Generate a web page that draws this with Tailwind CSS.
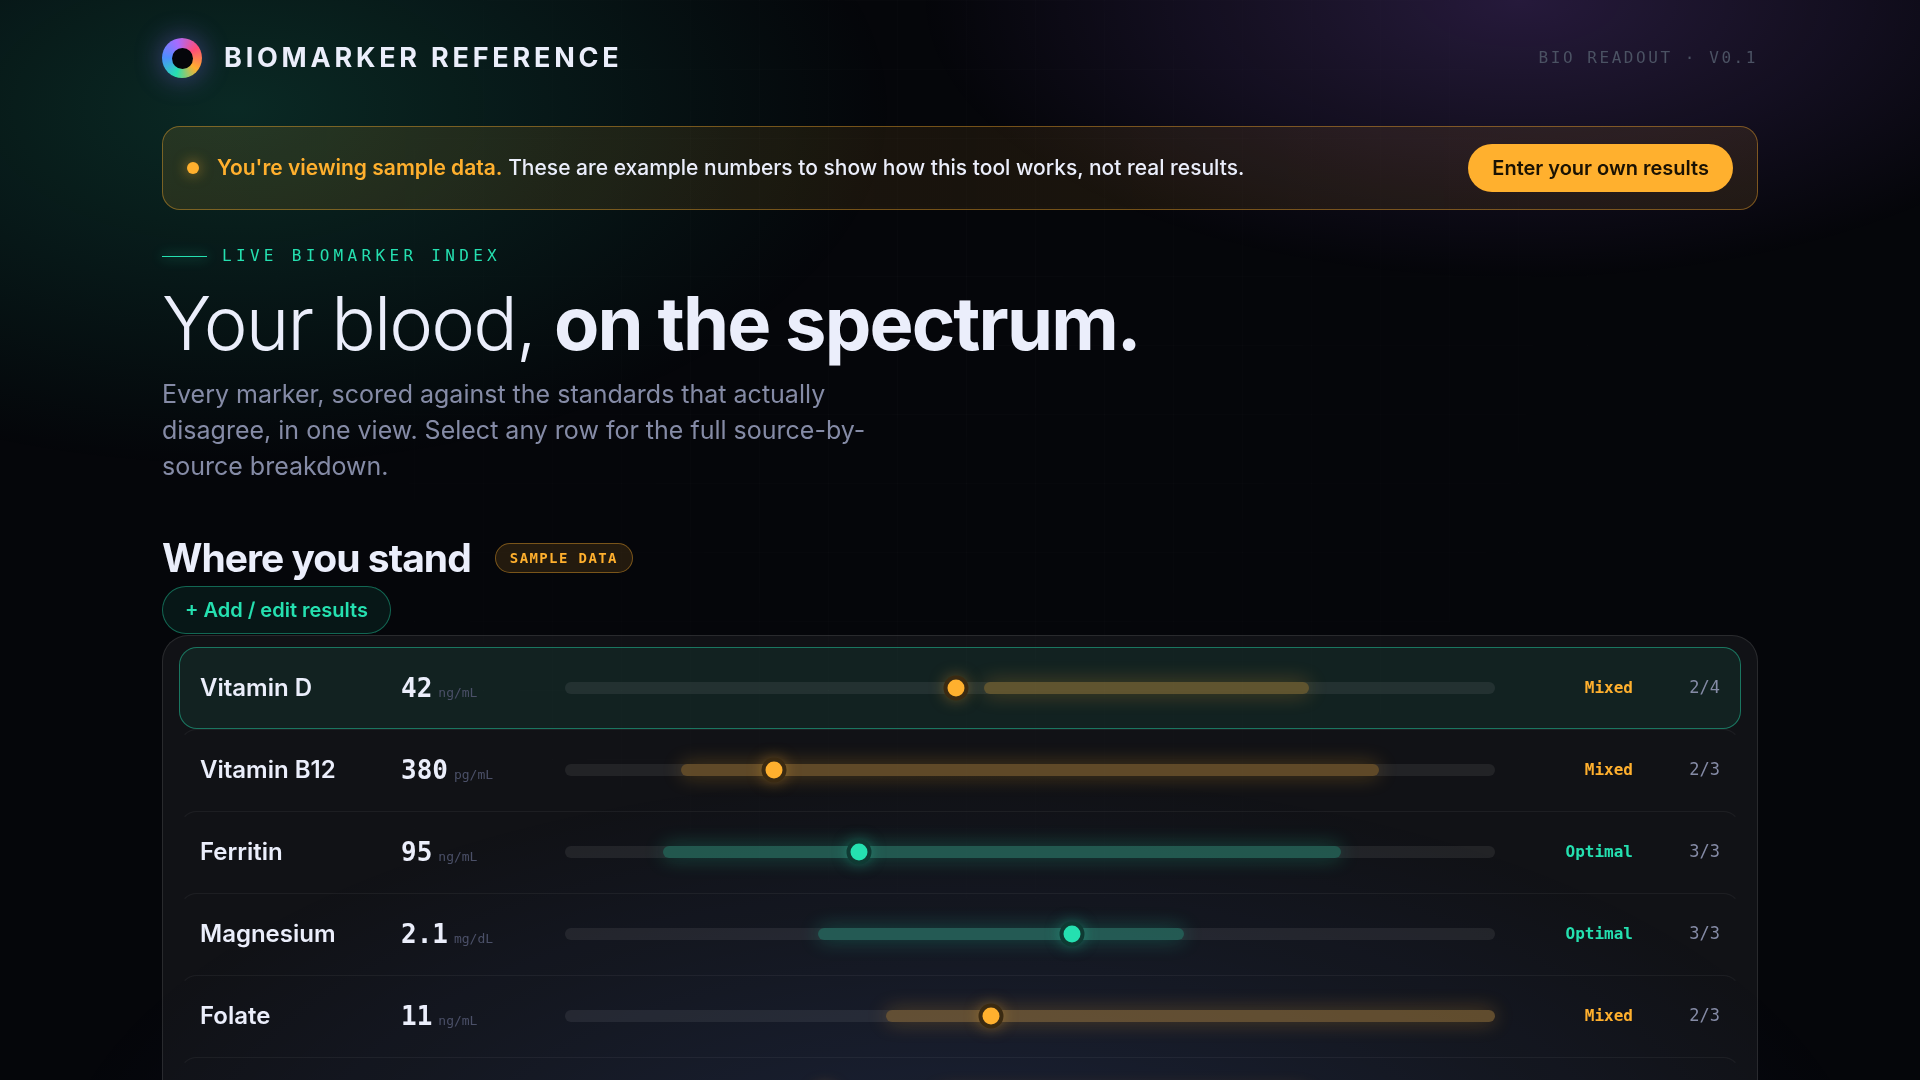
<!DOCTYPE html>
<html lang="en">
<head>
  <meta charset="UTF-8" />
  <meta name="viewport" content="width=device-width, initial-scale=1.0" />
  <title>Biomarker Reference</title>
  <script src="https://cdn.jsdelivr.net/npm/@tailwindcss/browser@4"></script>
  <style>
    .glow {
      background:
        radial-gradient(ellipse 660px 360px at 235px 108px, rgba(37, 224, 176, .16), transparent),
        radial-gradient(ellipse 600px 280px at 1520px 0px, rgba(168, 107, 255, .20), transparent),
        radial-gradient(ellipse 920px 430px at 960px 1200px, rgba(77, 124, 255, .14), transparent);
    }
    .grid-lines {
      background-image:
        linear-gradient(rgba(255, 255, 255, .014) 1px, transparent 1px),
        linear-gradient(90deg, rgba(255, 255, 255, .014) 1px, transparent 1px);
      background-size: 69px 69px;
      mask-image: radial-gradient(circle at 50% 30%, #000, transparent 75%);
    }
  </style>
</head>
<body class="min-h-screen bg-[#05060a] text-[#ebeefb] font-['Inter',sans-serif]">

  <div class="glow fixed inset-0 pointer-events-none"></div>
  <div class="grid-lines fixed inset-0 pointer-events-none"></div>

  <div class="relative w-[84%] max-w-[1596px] mx-auto">

    <!-- Header -->
    <header class="flex items-center justify-between pt-[38px]">
      <div class="flex items-center gap-[22px]">
        <div class="w-10 h-10 rounded-full flex items-center justify-center bg-[conic-gradient(from_200deg,#25e0b0,#4d8dff,#a86bff,#ff4d78,#ffb02e,#25e0b0)] shadow-[0_0_28px_rgba(139,107,255,0.45)]">
          <div class="w-[21px] h-[21px] rounded-full bg-[#05060a]"></div>
        </div>
        <span class="text-[27px] leading-10 font-bold tracking-[0.14em]">BIOMARKER REFERENCE</span>
      </div>
      <span class="text-base font-['DejaVu_Sans_Mono',monospace] text-[#4b5263] tracking-[0.16em]">BIO READOUT · V0.1</span>
    </header>

    <!-- Sample data banner -->
    <div class="mt-12 h-21 flex items-center justify-between px-6 rounded-[18px] border border-[#ffb02e]/40 bg-linear-to-r from-[#ffb02e]/12 via-[#ffb02e]/8 to-[#ffb02e]/10">
      <div class="flex items-center gap-[18px]">
        <span class="w-3 h-3 rounded-full bg-[#ffb02e] shadow-[0_0_14px_rgba(255,176,46,0.6)]"></span>
        <p class="text-[21px] font-medium"><strong class="font-semibold text-[#ffb02e]">You're viewing sample data.</strong> These are example numbers to show how this tool works, not real results.</p>
      </div>
      <button class="h-12 px-6 rounded-full bg-[#ffb02e] text-[#1a1203] text-xl font-semibold">Enter your own results</button>
    </div>

    <!-- Hero -->
    <section class="pt-[34px]">
      <div class="flex items-center gap-[15px]">
        <span class="w-[45px] h-px bg-[#25e0b0] shadow-[0_0_12px_#25e0b0]"></span>
        <span class="text-base leading-6 font-['DejaVu_Sans_Mono',monospace] text-[#25e0b0] tracking-[0.27em]">LIVE BIOMARKER INDEX</span>
      </div>
      <h1 class="mt-4 text-[74px] leading-[78px] font-light tracking-tight">Your blood, <strong class="font-bold">on the spectrum.</strong></h1>
      <p class="mt-[14px] max-w-[740px] text-[25px] leading-9 text-[#858ba6]">Every marker, scored against the standards that actually disagree, in one view. Select any row for the full source-by-source breakdown.</p>
    </section>

    <!-- Results heading -->
    <section class="mt-[50px]">
      <div class="flex items-center gap-6">
        <h2 class="text-[39px] leading-12 font-bold tracking-tight">Where you stand</h2>
        <span class="h-[30px] px-[14px] flex items-center rounded-full border border-[#ffb02e]/40 bg-[#ffb02e]/12 text-sm font-bold font-['DejaVu_Sans_Mono',monospace] text-[#ffb02e] tracking-widest">SAMPLE DATA</span>
      </div>
      <button class="mt-1 h-12 px-[22px] block rounded-full border border-[#25e0b0]/40 bg-[#25e0b0]/8 text-[#25e0b0] text-xl font-semibold">+ Add / edit results</button>

      <!-- Marker rows -->
      <div id="rows" class="mt-px px-4 py-[11px] rounded-[26px] border border-white/10 bg-white/5"></div>
    </section>
  </div>

  <script>
    const amber = {
      text: "text-[#ffb02e]",
      band: "bg-[#ffb02e]/28 shadow-[0_0_20px_rgba(255,176,46,0.3)]",
      dot: "bg-[#ffb02e] shadow-[0_0_0_4px_#3a2a12,0_0_16px_2px_rgba(255,176,46,0.5)]"
    };
    const green = {
      text: "text-[#25e0b0]",
      band: "bg-[#25e0b0]/28 shadow-[0_0_20px_rgba(37,224,176,0.3)]",
      dot: "bg-[#25e0b0] shadow-[0_0_0_4px_#0f3a33,0_0_16px_2px_rgba(37,224,176,0.5)]"
    };

    // band is [from, to] and at is the marker, all in percent of the track
    const markers = [
      { name: "Vitamin D", value: "42", unit: "ng/mL", band: [45, 80], at: 42, status: "Mixed", score: "2/4", tone: amber },
      { name: "Vitamin B12", value: "380", unit: "pg/mL", band: [12.5, 87.5], at: 22.5, status: "Mixed", score: "2/3", tone: amber },
      { name: "Ferritin", value: "95", unit: "ng/mL", band: [10.5, 83.4], at: 31.6, status: "Optimal", score: "3/3", tone: green },
      { name: "Magnesium", value: "2.1", unit: "mg/dL", band: [27.2, 66.6], at: 54.5, status: "Optimal", score: "3/3", tone: green },
      { name: "Folate", value: "11", unit: "ng/mL", band: [34.5, 100], at: 45.8, status: "Mixed", score: "2/3", tone: amber },
      { name: "Zinc", value: "88", unit: "µg/dL", band: [40, 80], at: 28, status: "Mixed", score: "2/3", tone: amber }
    ];

    document.getElementById("rows").innerHTML = markers.map((m, i) => `
      <button class="w-full h-[82px] px-5 grid grid-cols-[177px_140px_1fr_114px_63px] gap-x-6 items-center text-left rounded-[18px] border ${i === 0 ? "border-[#25e0b0]/45 bg-[#25e0b0]/8" : "border-transparent border-t-white/5"}">
        <span class="text-2xl font-semibold">${m.name}</span>
        <span class="font-['DejaVu_Sans_Mono',monospace] whitespace-nowrap"><b class="text-[26px]">${m.value}</b><span class="ml-1.5 text-[13px] text-[#4b5068]">${m.unit}</span></span>
        <span class="relative h-3 rounded-full bg-white/7">
          <span class="absolute inset-y-0 rounded-full ${m.tone.band}" style="left:${m.band[0]}%;width:${m.band[1] - m.band[0]}%"></span>
          <span class="absolute top-1/2 w-[17px] h-[17px] -translate-1/2 rounded-full ${m.tone.dot}" style="left:${m.at}%"></span>
        </span>
        <span class="text-right text-base font-bold font-['DejaVu_Sans_Mono',monospace] ${m.tone.text}">${m.status}</span>
        <span class="text-right text-[17px] font-['DejaVu_Sans_Mono',monospace] text-[#858ba6]">${m.score}</span>
      </button>`).join("");
  </script>
</body>
</html>
